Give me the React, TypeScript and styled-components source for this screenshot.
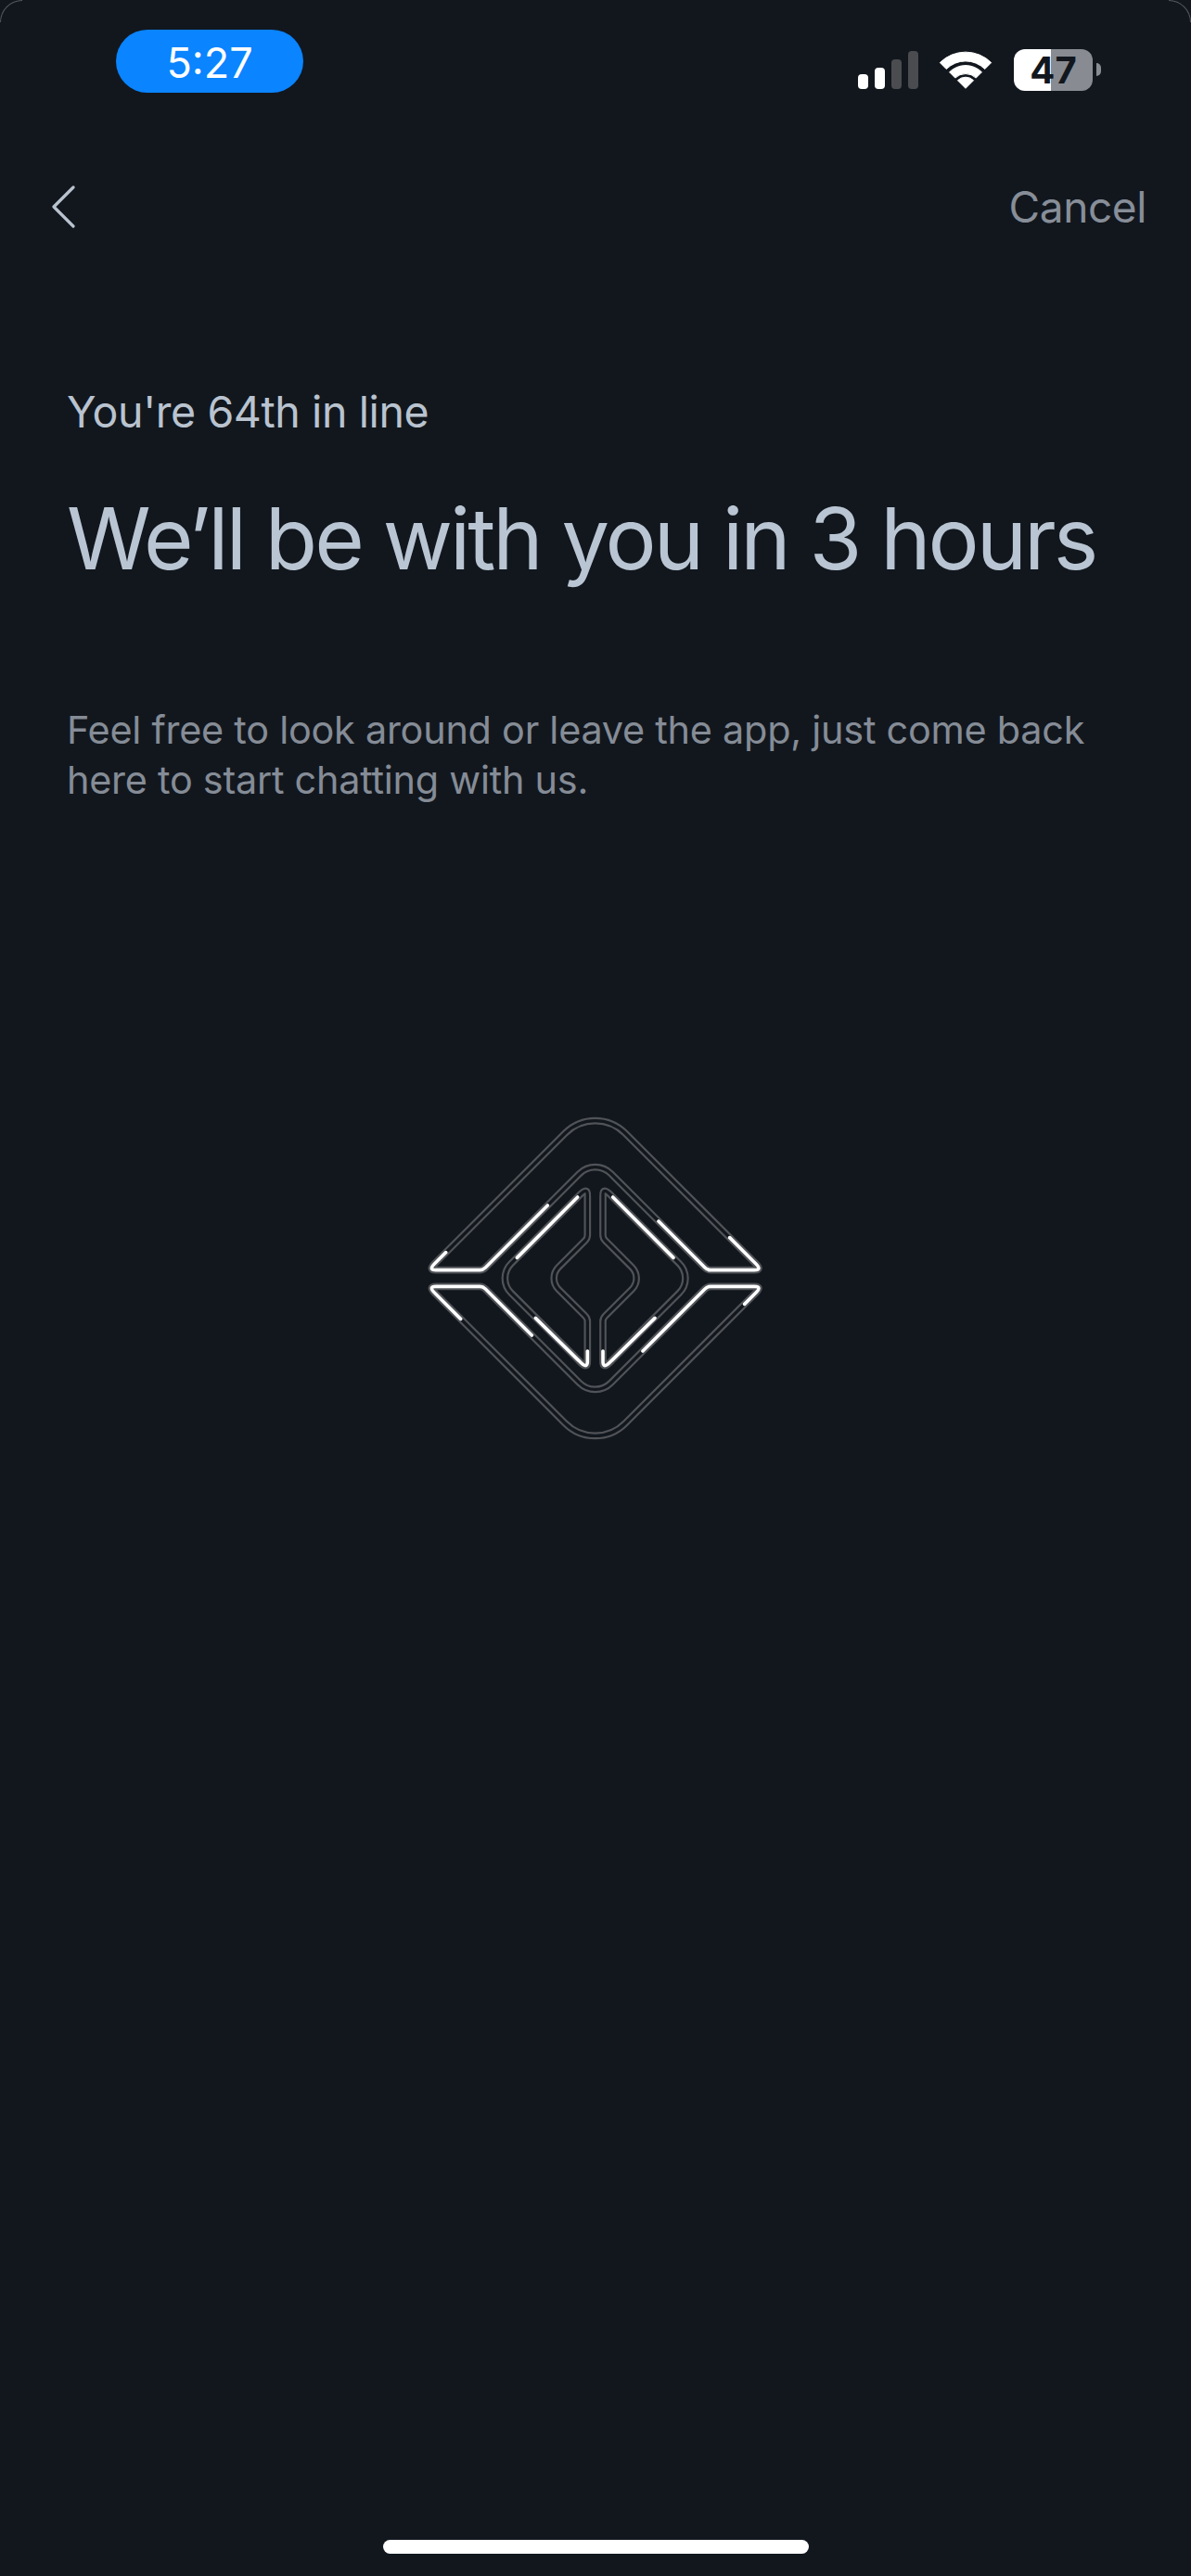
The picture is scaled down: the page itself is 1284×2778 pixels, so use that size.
import React from 'react'
import styled, { createGlobalStyle } from 'styled-components'

const GlobalStyle = createGlobalStyle`
  html, body {
    margin: 0;
    padding: 0;
    background: #12171e;
  }
`

const Screen = styled.div`
  width: 1284px;
  height: 2778px;
  box-sizing: border-box;
  position: relative;
  overflow: hidden;
  display: flex;
  flex-direction: column;
  background: #12171e;
  font-family: Inter, 'Liberation Sans', sans-serif;
`

const Corner = styled.div<{ $side: 'left' | 'right' }>`
  position: absolute;
  top: 0;
  ${(props) => props.$side}: 0;
  width: 24px;
  height: 24px;
  box-sizing: border-box;
  border-top: 1.5px solid #55585c;
  border-${(props) => props.$side}: 1.5px solid #55585c;
  border-top-${(props) => props.$side}-radius: 24px;
`

const StatusBar = styled.div`
  height: 100px;
  padding-top: 32px;
  box-sizing: border-box;
  display: flex;
  justify-content: space-between;
`

const TimePill = styled.div`
  margin-left: 125px;
  width: 202px;
  height: 68px;
  border-radius: 34px;
  background: #0a84ff;
  color: #ffffff;
  font-size: 45px;
  line-height: 71px;
  text-align: center;
`

const StatusIcons = styled.div`
  display: flex;
  align-items: flex-start;
  margin-right: 106px;
  margin-top: 21px;
`

const Signal = styled.svg`
  width: 66px;
  height: 42px;
  margin-top: 2px;
  margin-right: 19px;
`

const Wifi = styled.svg`
  width: 62px;
  height: 43px;
  margin-top: 1px;
  margin-right: 21px;
`

const Battery = styled.div`
  width: 85px;
  height: 45px;
  border-radius: 12px;
  background: linear-gradient(90deg, #ffffff 47%, #888c92 47%);
  color: #12171e;
  font-size: 40px;
  font-weight: 700;
  line-height: 45px;
  text-align: center;
  position: relative;

  &::after {
    content: '';
    position: absolute;
    left: 89px;
    top: 15px;
    width: 5px;
    height: 14px;
    border-radius: 0 7px 7px 0;
    background: #888c92;
  }
`

const NavBar = styled.div`
  display: flex;
  justify-content: space-between;
  align-items: center;
  height: 50px;
  margin-top: 98px;
  padding: 0 48px 2px 55px;
`

const BackIcon = styled.svg`
  width: 26px;
  height: 46px;
`

const CancelLabel = styled.div`
  color: #878e98;
  font-size: 46px;
  font-weight: 400;
  letter-spacing: -0.4px;
  line-height: 50px;
`

const Intro = styled.div`
  display: flex;
  flex-direction: column;
  padding: 0 72px;
  margin-top: 166px;
`

const QueueLine = styled.div`
  color: #b9c3cf;
  font-size: 46.5px;
  font-weight: 400;
  letter-spacing: -0.4px;
  line-height: 56px;
`

const Heading = styled.h1`
  margin: 54px 0 0;
  color: #b9c5d2;
  font-size: 92px;
  font-weight: 400;
  letter-spacing: -3px;
  line-height: 110px;
  white-space: nowrap;
`

const Body = styled.p`
  margin: 124px 0 0;
  color: #858c96;
  font-size: 41.4px;
  font-weight: 400;
  letter-spacing: -0.25px;
  line-height: 54px;
  white-space: nowrap;
`

const Logo = styled.svg`
  width: 400px;
  height: 400px;
  margin: 314px auto 0;
  fill: none;
  stroke-linecap: round;
  stroke-linejoin: round;
`

const HomeIndicator = styled.div`
  position: absolute;
  left: 413px;
  bottom: 24px;
  width: 459px;
  height: 15px;
  border-radius: 8px;
  background: #ffffff;
`

const chevron =
  'M508 120L85 543Q65 563 90 563L232 563Q242 563 250 555L554 251A72 72 0 0 1 656 251L960 555Q968 563 978 563L1120 563Q1145 563 1125 543L702 120A137 137 0 0 0 508 120Z'
const chevronLit = [
  'M122 506L85 543Q65 563 90 563L232 563Q242 563 250 555L451 354',
  'M810 405L960 555Q968 563 978 563L1120 563Q1145 563 1125 543L1040 458',
]
const wing =
  'M580 325L580 450Q580 460 572 468L486 554A51 51 0 0 0 486 625L572 711Q580 719 580 729L580 854Q582 889 552 856L333 637A67 67 0 0 1 333 542L552 323Q582 290 580 325Z'
const wingLit = [
  'M352 523L548 327',
  'M412 718L552 856Q582 889 580 854L580 825',
]

const LogoPart = ({ outline, lit, transform }: { outline: string; lit: string[]; transform?: string }) => (
  <g transform={transform}>
    <path d={outline} stroke="#505357" strokeWidth={23} />
    <path d={outline} stroke="#12171e" strokeWidth={10} />
    {lit.map((d) => (
      <path key={d} d={d} stroke="#ffffff" strokeWidth={11} />
    ))}
  </g>
)

const App = () => {
  return (
    <Screen>
      <GlobalStyle />
      <Corner $side="left" />
      <Corner $side="right" />
      <StatusBar>
        <TimePill>5:27</TimePill>
        <StatusIcons>
          <Signal viewBox="0 0 66 42">
            <rect x="0" y="25" width="11" height="16" rx="4" fill="#ffffff" />
            <rect x="18" y="18" width="11" height="23" rx="4" fill="#ffffff" />
            <rect x="36" y="9" width="11" height="32" rx="4" fill="#4a4c50" />
            <rect x="54" y="0" width="11" height="41" rx="4" fill="#4a4c50" />
          </Signal>
          <Wifi viewBox="330 72 188 130">
            <path
              d="M340 113A119 119 0 0 1 508 113L487 134A89 89 0 0 0 361 134ZM371 144A75 75 0 0 1 477 144L458 163A49 49 0 0 0 390 163ZM398 171A37 37 0 0 1 450 171L424 197Z"
              fill="#ffffff"
              stroke="#ffffff"
              strokeWidth="3"
              strokeLinejoin="round"
            />
          </Wifi>
          <Battery>47</Battery>
        </StatusIcons>
      </StatusBar>
      <NavBar>
        <BackIcon viewBox="0 0 26 46" fill="none">
          <path d="M24 2L3 23L24 44" stroke="#b9c3cf" strokeWidth="3.2" strokeLinecap="round" strokeLinejoin="round" />
        </BackIcon>
        <CancelLabel>Cancel</CancelLabel>
      </NavBar>
      <Intro>
        <QueueLine>You're 64th in line</QueueLine>
        <Heading>We’ll be with you in 3 hours</Heading>
        <Body>
          Feel free to look around or leave the app, just come back
          <br />
          here to start chatting with us.
        </Body>
      </Intro>
      <Logo viewBox="6 0 1200 1200">
        <LogoPart outline={chevron} lit={chevronLit} />
        <LogoPart outline={chevron} lit={chevronLit} transform="rotate(180 605 589.5)" />
        <LogoPart outline={wing} lit={wingLit} />
        <LogoPart outline={wing} lit={wingLit} transform="matrix(-1 0 0 1 1210 0)" />
      </Logo>
      <HomeIndicator />
    </Screen>
  )
}

export default App
